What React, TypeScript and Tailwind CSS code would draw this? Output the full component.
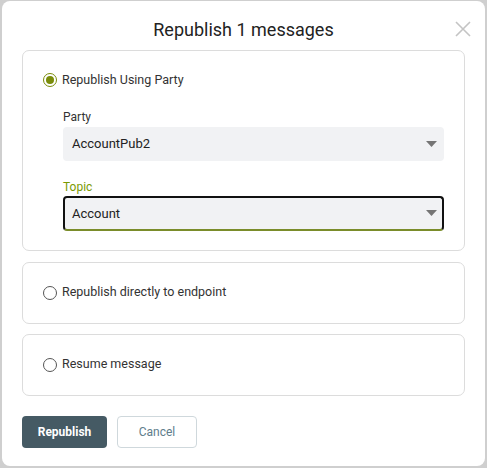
import { useState } from 'react';

type Mode = 'party' | 'endpoint' | 'resume';

function Radio({ checked }: { checked: boolean }) {
  return (
    <span
      className={`flex h-[14px] w-[14px] shrink-0 items-center justify-center rounded-full border ${
        checked ? 'border-[#7a8c0a] border-[1.5px]' : 'border-[#555]'
      }`}
    >
      {checked && <span className="h-[8px] w-[8px] rounded-full bg-[#7a8c0a]" />}
    </span>
  );
}

function Caret() {
  return (
    <svg width="11" height="6" viewBox="0 0 11 6" className="shrink-0">
      <path d="M0 0h11L5.5 6z" fill="#757575" />
    </svg>
  );
}

export default function App() {
  const [mode, setMode] = useState<Mode>('party');

  return (
    <div
      className="h-[468px] w-[487px] bg-[#cfcfcf] pl-[2px] pr-[2px] pt-[1px] pb-[2px]"
      style={{ fontFamily: 'Roboto, "Liberation Sans", sans-serif' }}
    >
      <div className="flex h-full flex-col rounded-[8px] bg-white px-[20px]">
        {/* Header */}
        <div className="relative flex h-[49px] items-center justify-center pt-[7px]">
          <h1 className="text-[18px] text-[#222]">Republish 1 messages</h1>
          <button className="absolute right-[-6px] top-[20px] text-[#c4c4c4]">
            <svg width="16" height="16" viewBox="0 0 16 16">
              <path d="M1 1L15 15M15 1L1 15" stroke="currentColor" strokeWidth="1.6" />
            </svg>
          </button>
        </div>

        {/* Option: party */}
        <div className="rounded-[7px] border border-[#dcdcdc] px-[20px] pb-[19px] pt-[20px]">
          <button className="flex items-center gap-[5px]" onClick={() => setMode('party')}>
            <Radio checked={mode === 'party'} />
            <span className="text-[12.5px] text-[#333]">Republish Using Party</span>
          </button>

          <div className="mt-[20px] pl-[20px]">
            <div className="text-[12px] leading-[14px] text-[#333]">Party</div>
            <div className="mt-[3px] flex h-[34px] items-center justify-between rounded-[4px] bg-[#f1f2f4] pl-[9px] pr-[7px]">
              <span className="text-[13px] text-[#222]">AccountPub2</span>
              <Caret />
            </div>

            <div className="mt-[19px] text-[12px] leading-[14px] text-[#7a9a01]">Topic</div>
            <div className="mt-[2px] flex h-[35px] items-center justify-between rounded-[4px] border-2 border-[#111] border-b-[#7a8c2a] bg-[#f1f2f4] pl-[7px] pr-[5px]">
              <span className="text-[13px] text-[#222]">Account</span>
              <Caret />
            </div>
          </div>
        </div>

        {/* Option: endpoint */}
        <button
          className="mt-[11px] flex h-[62px] items-center gap-[5px] rounded-[7px] border border-[#dcdcdc] px-[20px] text-left"
          onClick={() => setMode('endpoint')}
        >
          <Radio checked={mode === 'endpoint'} />
          <span className="text-[12.5px] text-[#333]">Republish directly to endpoint</span>
        </button>

        {/* Option: resume */}
        <button
          className="mt-[10px] flex h-[62px] items-center gap-[5px] rounded-[7px] border border-[#dcdcdc] px-[20px] text-left"
          onClick={() => setMode('resume')}
        >
          <Radio checked={mode === 'resume'} />
          <span className="text-[12.5px] text-[#333]">Resume message</span>
        </button>

        {/* Footer */}
        <div className="mt-[20px] flex gap-[10px]">
          <button className="h-[32px] w-[85px] rounded-[4px] bg-[#455a64] text-[12px] font-bold text-white">
            Republish
          </button>
          <button className="h-[32px] w-[80px] rounded-[4px] border border-[#cfd8dc] bg-white text-[12px] text-[#607d8b]">
            Cancel
          </button>
        </div>
      </div>
    </div>
  );
}
